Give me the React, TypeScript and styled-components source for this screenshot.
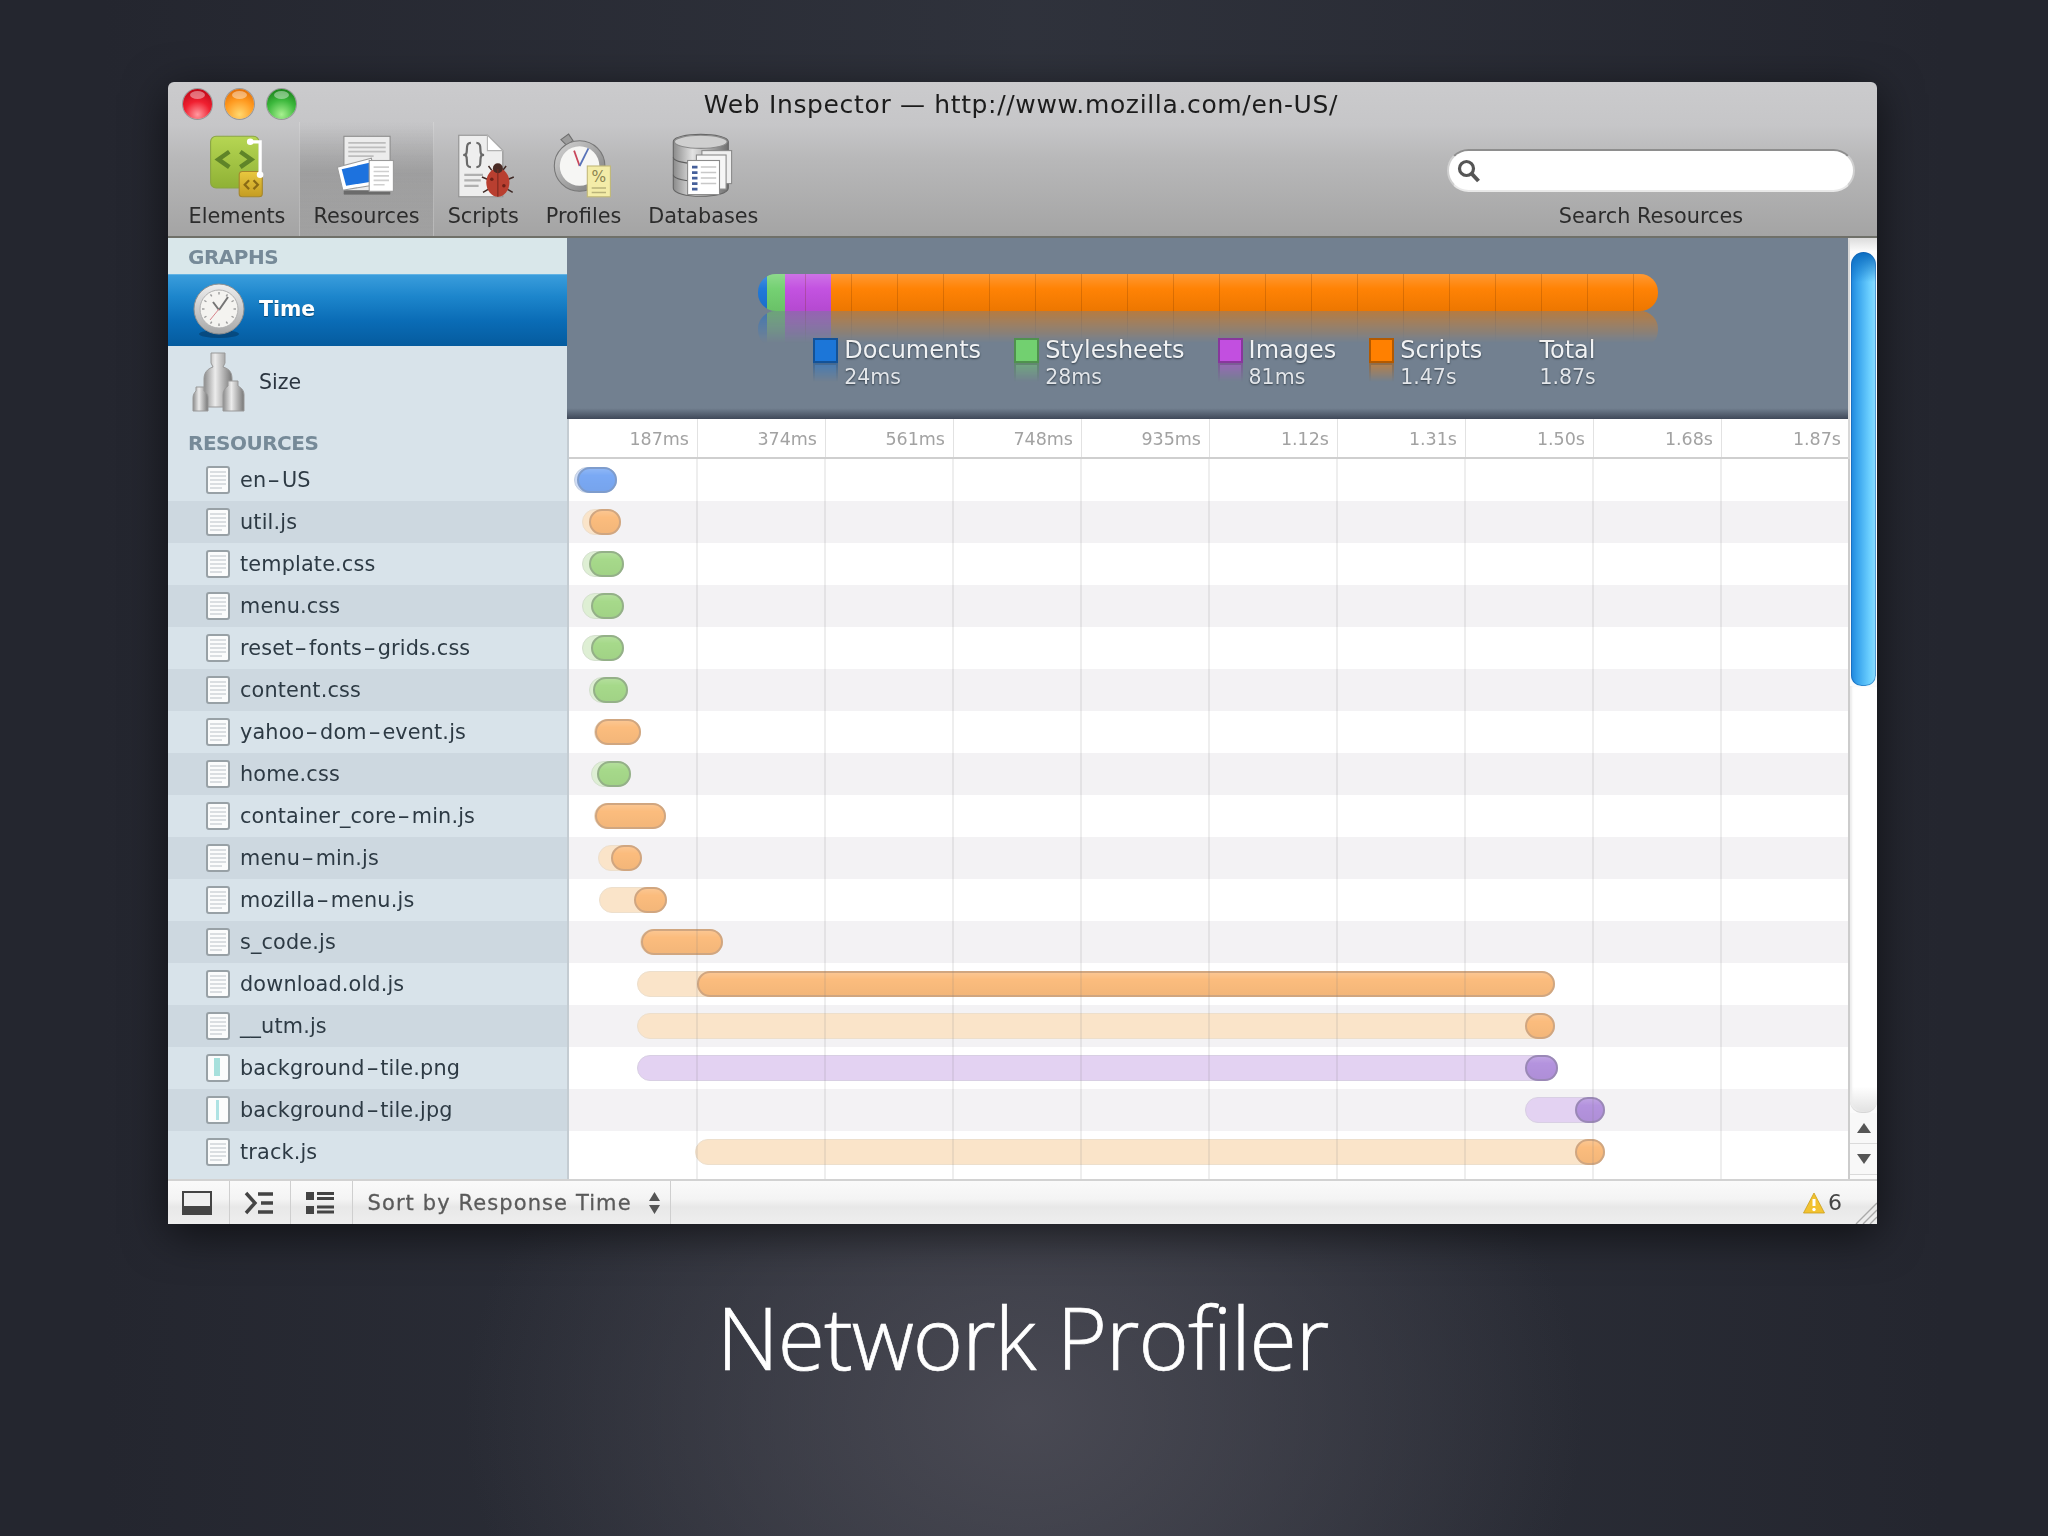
import React from "react"
import styled, { createGlobalStyle } from "styled-components"

type Kind = "blue" | "orange" | "green" | "purple"

interface Resource {
    name: string
    kind: Kind
    start: number
    solid: number
    end: number
    thumb?: "text" | "wide" | "thin"
}

const resources: Resource[] = [
    { name: "en-US", kind: "blue", start: 5, solid: 8, end: 48 },
    { name: "util.js", kind: "orange", start: 13, solid: 20, end: 52 },
    { name: "template.css", kind: "green", start: 13, solid: 20, end: 55 },
    { name: "menu.css", kind: "green", start: 13, solid: 22, end: 55 },
    { name: "reset-fonts-grids.css", kind: "green", start: 13, solid: 22, end: 55 },
    { name: "content.css", kind: "green", start: 20, solid: 24, end: 59 },
    { name: "yahoo-dom-event.js", kind: "orange", start: 25, solid: 26, end: 72 },
    { name: "home.css", kind: "green", start: 22, solid: 28, end: 62 },
    { name: "container_core-min.js", kind: "orange", start: 25, solid: 26, end: 97 },
    { name: "menu-min.js", kind: "orange", start: 29, solid: 42, end: 73 },
    { name: "mozilla-menu.js", kind: "orange", start: 30, solid: 65, end: 98 },
    { name: "s_code.js", kind: "orange", start: 71, solid: 72, end: 154 },
    { name: "download.old.js", kind: "orange", start: 68, solid: 128, end: 986 },
    { name: "__utm.js", kind: "orange", start: 68, solid: 956, end: 986 },
    { name: "background-tile.png", kind: "purple", start: 68, solid: 956, end: 989, thumb: "wide" },
    { name: "background-tile.jpg", kind: "purple", start: 956, solid: 1006, end: 1036, thumb: "thin" },
    { name: "track.js", kind: "orange", start: 126, solid: 1006, end: 1036 },
]

const ticks = ["187ms", "374ms", "561ms", "748ms", "935ms", "1.12s", "1.31s", "1.50s", "1.68s", "1.87s"]

const legend = [
    { label: "Documents", value: "24ms", color: "#1c76d8" },
    { label: "Stylesheets", value: "28ms", color: "#72d070" },
    { label: "Images", value: "81ms", color: "#c24fe0" },
    { label: "Scripts", value: "1.47s", color: "#ff8000" },
]

const tools = [
    { label: "Elements", icon: <ElementsIcon /> },
    { label: "Resources", icon: <ResourcesIcon />, active: true },
    { label: "Scripts", icon: <ScriptsIcon /> },
    { label: "Profiles", icon: <ProfilesIcon /> },
    { label: "Databases", icon: <DatabasesIcon /> },
]

function ElementsIcon() {
    return (
        <svg width="66" height="66" viewBox="0 0 60 60">
            <defs>
                <linearGradient id="elGreen" x1="0" y1="0" x2="0" y2="1">
                    <stop offset="0" stopColor="#b6d653" />
                    <stop offset="1" stopColor="#8fb135" />
                </linearGradient>
                <linearGradient id="elYellow" x1="0" y1="0" x2="0" y2="1">
                    <stop offset="0" stopColor="#e9c83f" />
                    <stop offset="1" stopColor="#c49c22" />
                </linearGradient>
            </defs>
            <rect x="6" y="3" width="44" height="47" rx="5" fill="url(#elGreen)" stroke="#8aa544" />
            <path d="M23 17 L13 24 L23 31 M33 17 L43 24 L33 31" fill="none" stroke="#5f8428" strokeWidth="4" />
            <rect x="32" y="35" width="21" height="23" rx="3" fill="url(#elYellow)" stroke="#a5862c" />
            <path d="M41 43 L37 47 L41 51 M45 43 L49 47 L45 51" fill="none" stroke="#8a6a15" strokeWidth="2" />
            <path d="M42 8 H51 V38" fill="none" stroke="#fff" strokeWidth="3" />
            <circle cx="42" cy="8" r="3" fill="#fff" />
            <circle cx="51" cy="38" r="3" fill="#fff" />
        </svg>
    )
}

function ResourcesIcon() {
    return (
        <svg width="66" height="66" viewBox="0 0 60 60">
            <rect x="9" y="3" width="42" height="52" fill="#ececec" stroke="#8d8d8d" />
            <rect x="9" y="52" width="42" height="4" fill="#6b6b6b" />
            <path d="M13 9 H47 M13 13 H47 M13 17 H47 M13 21 H36" stroke="#bdbdbd" strokeWidth="1.6" />
            <path d="M3 31 L34 23 L38 47 L8 52 Z" fill="#fff" stroke="#9b9b9b" />
            <path d="M7 33 L32 27 L35 44 L11 48 Z" fill="#1d72de" />
            <rect x="32" y="25" width="22" height="28" fill="#fff" stroke="#9a9a9a" />
            <path d="M36 31 H50 M36 35 H50 M36 39 H50 M36 43 H50 M36 47 H46" stroke="#cfcfcf" strokeWidth="1.5" />
        </svg>
    )
}

function ScriptsIcon() {
    return (
        <svg width="66" height="66" viewBox="0 0 60 60">
            <path d="M8 2 H34 L48 16 V58 H8 Z" fill="#eeeeee" stroke="#8f8f8f" />
            <path d="M34 2 V16 H48 Z" fill="#fff" stroke="#b3b3b3" />
            <path
                d="M19 9 C14 9 16 15 15 18 C15 20 12 20 12 20 C12 20 15 20 15 22 C16 26 14 31 19 31 M24 9 C29 9 27 15 28 18 C28 20 31 20 31 20 C31 20 28 20 28 22 C27 26 29 31 24 31"
                fill="none"
                stroke="#6a6a6a"
                strokeWidth="2"
            />
            <path d="M13 38 H30 M13 43 H28 M13 48 H26" stroke="#b0b0b0" strokeWidth="2" />
            <path d="M38 34 L35 30 M48 34 L51 30 M34 42 L29 40 M53 42 L58 40 M35 51 L30 54 M52 51 L57 54" stroke="#3f2a26" strokeWidth="1.4" />
            <ellipse cx="43.5" cy="45" rx="10.5" ry="13" fill="#b93f30" />
            <circle cx="43.5" cy="32" r="4.5" fill="#4a2b25" />
            <path d="M43.5 33 V58" stroke="#7b2a20" strokeWidth="1" />
            <circle cx="38" cy="42" r="1.6" fill="#6e2118" />
            <circle cx="49" cy="48" r="1.6" fill="#6e2118" />
        </svg>
    )
}

function ProfilesIcon() {
    return (
        <svg width="66" height="66" viewBox="0 0 60 60">
            <defs>
                <linearGradient id="watchRing" x1="0" y1="0" x2="1" y2="1">
                    <stop offset="0" stopColor="#d6d6d6" />
                    <stop offset="1" stopColor="#777" />
                </linearGradient>
            </defs>
            <path d="M9 6 L16 1 L20 7 L14 11 Z" fill="#9c9c9c" stroke="#6f6f6f" />
            <circle cx="26" cy="30" r="23" fill="url(#watchRing)" stroke="#777" />
            <circle cx="26" cy="30" r="18" fill="#f6f6f4" />
            <path d="M26 30 L21 16" stroke="#c8465a" strokeWidth="1.6" />
            <path d="M26 30 L34 14" stroke="#5872b8" strokeWidth="1.6" />
            <rect x="33" y="30" width="21" height="28" fill="#f3eca8" stroke="#c2b978" />
            <text x="43.5" y="45" fontSize="14" fill="#8a8450" textAnchor="middle" fontFamily="'DejaVu Sans', sans-serif">%</text>
            <path d="M37 50 H50 M37 54 H50" stroke="#b9b27a" strokeWidth="1.4" />
        </svg>
    )
}

function DatabasesIcon() {
    return (
        <svg width="66" height="66" viewBox="0 0 60 60">
            <defs>
                <linearGradient id="dbMetal" x1="0" y1="0" x2="1" y2="0">
                    <stop offset="0" stopColor="#8b8b8b" />
                    <stop offset="0.35" stopColor="#e2e2e2" />
                    <stop offset="1" stopColor="#6e6e6e" />
                </linearGradient>
            </defs>
            <path d="M3 8 C3 -1 53 -1 53 8 V50 C53 60 3 60 3 50 Z" fill="url(#dbMetal)" stroke="#666" />
            <ellipse cx="28" cy="8" rx="24" ry="6" fill="#cfcfcf" stroke="#8a8a8a" />
            <path d="M3 22 C3 30 53 30 53 22 M3 38 C3 46 53 46 53 38" fill="none" stroke="#5e5e5e" />
            <rect x="29" y="16" width="27" height="30" fill="#efefef" stroke="#8a8a8a" />
            <rect x="24" y="20" width="27" height="31" fill="#f6f6f6" stroke="#8a8a8a" />
            <rect x="16" y="25" width="29" height="31" fill="#fff" stroke="#8a8a8a" />
            <path d="M20 31 H25 M20 36 H25 M20 41 H25 M20 46 H25 M20 51 H25" stroke="#46609b" strokeWidth="2.4" />
            <path d="M28 31 H42 M28 36 H42 M28 41 H42 M28 46 H42" stroke="#c8c8c8" strokeWidth="1.4" />
        </svg>
    )
}

function ClockIcon() {
    const marks = [0, 30, 60, 90, 120, 150, 180, 210, 240, 270, 300, 330]
    return (
        <svg width="54" height="58" viewBox="0 0 54 58">
            <defs>
                <linearGradient id="clockRing" x1="0" y1="0" x2="0" y2="1">
                    <stop offset="0" stopColor="#eeeeee" />
                    <stop offset="1" stopColor="#a8a8a8" />
                </linearGradient>
            </defs>
            <ellipse cx="27" cy="52" rx="20" ry="4" fill="#06365e" opacity="0.55" />
            <circle cx="27" cy="27" r="25" fill="url(#clockRing)" stroke="#8f8f8f" />
            <circle cx="27" cy="27" r="19" fill="#f4f3f0" stroke="#b2b2b2" />
            {marks.map((m) => (
                <path key={m} d="M27 10 V12.5" stroke="#9a9a9a" strokeWidth="1.4" transform={`rotate(${m} 27 27)`} />
            ))}
            <path d="M27 28 L21 20 M27 28 L36 15" stroke="#757575" strokeWidth="2" />
            <path d="M27 27 L18 38" stroke="#d8848c" strokeWidth="1" />
        </svg>
    )
}

function WeightsIcon() {
    return (
        <svg width="54" height="62" viewBox="0 0 54 62">
            <defs>
                <linearGradient id="weightMetal" x1="0" y1="0" x2="1" y2="0">
                    <stop offset="0" stopColor="#8c8c8c" />
                    <stop offset="0.4" stopColor="#ececec" />
                    <stop offset="1" stopColor="#777" />
                </linearGradient>
            </defs>
            <path d="M19 2 H33 V12 L31 16 C38 18 40 22 40 28 V56 H12 V28 C12 22 15 18 21 16 L19 12 Z" fill="url(#weightMetal)" stroke="#999" />
            <path d="M4 36 H12 V40 C15 42 16 44 16 47 V60 H1 V47 C1 44 2 42 4 40 Z" fill="url(#weightMetal)" stroke="#999" />
            <path d="M36 30 H46 V35 C50 37 52 40 52 44 V60 H31 V44 C31 40 33 37 36 35 Z" fill="url(#weightMetal)" stroke="#999" />
        </svg>
    )
}

function FileIcon({ thumb = "text" }: { thumb?: "text" | "wide" | "thin" }) {
    return (
        <svg width="24" height="28" viewBox="0 0 24 28">
            <rect x="1" y="1" width="22" height="26" rx="2" fill="#fbfcfc" stroke="#98a1a6" strokeWidth="2" />
            {thumb === "text" && (
                <path d="M4 6 H20 M4 10 H20 M4 14 H20 M4 18 H20 M4 22 H16" stroke="#dadee1" strokeWidth="1.8" />
            )}
            {thumb === "wide" && <rect x="8" y="4" width="6" height="18" fill="#a6e0dc" />}
            {thumb === "thin" && <rect x="10" y="4" width="3" height="20" fill="#aee2e3" />}
        </svg>
    )
}

function SearchIcon() {
    return (
        <svg width="26" height="26" viewBox="0 0 26 26">
            <circle cx="10.5" cy="10.5" r="7" fill="none" stroke="#555" strokeWidth="3.2" />
            <path d="M15.5 15.5 L22.5 23" stroke="#555" strokeWidth="4" />
        </svg>
    )
}

function DockIcon() {
    return (
        <svg width="30" height="26" viewBox="0 0 30 26">
            <rect x="0" y="1" width="30" height="24" fill="#444" />
            <rect x="2" y="3" width="26" height="13" fill="#efefef" />
        </svg>
    )
}

function ConsoleIcon() {
    return (
        <svg width="30" height="26" viewBox="0 0 30 26">
            <path d="M2 3 L11 13 L2 23" fill="none" stroke="#444" strokeWidth="3.4" />
            <path d="M14 4 H29 M17 13 H29 M14 22 H29" stroke="#444" strokeWidth="3.6" />
        </svg>
    )
}

function ListIcon() {
    return (
        <svg width="30" height="26" viewBox="0 0 30 26">
            <path d="M1 2 H9 V10 H1 Z M1 16 H9 V24 H1 Z" fill="#444" />
            <path d="M12 3.5 H29 M12 8.5 H29 M12 17 H29 M12 22 H29" stroke="#444" strokeWidth="2.8" />
        </svg>
    )
}

function UpDownIcon() {
    return (
        <svg width="13" height="24" viewBox="0 0 13 24">
            <path d="M6.5 1 L12 10 H1 Z M6.5 23 L1 14 H12 Z" fill="#555" />
        </svg>
    )
}

function WarningIcon() {
    return (
        <svg width="22" height="22" viewBox="0 0 22 22">
            <path d="M11 1 L21.5 21 H0.5 Z" fill="#f2c230" stroke="#c99e1d" strokeWidth="0.8" />
            <path d="M11 7 V14" stroke="#fff" strokeWidth="3" />
            <circle cx="11" cy="17.5" r="1.7" fill="#fff" />
        </svg>
    )
}

function ArrowIcon({ down = false }: { down?: boolean }) {
    return (
        <svg width="14" height="12" viewBox="0 0 14 12">
            <path d={down ? "M0 1 H14 L7 11 Z" : "M7 1 L14 11 H0 Z"} fill="#555" />
        </svg>
    )
}

function GripIcon() {
    return (
        <svg width="22" height="22" viewBox="0 0 22 22">
            <path d="M1 22 L22 1 M8 22 L22 8 M15 22 L22 15" stroke="#a9a9a9" strokeWidth="1.4" />
        </svg>
    )
}

// the hyphen in this font is much shorter than the one in the shot
function splitName(name: string) {
    return name.split("-").map((part, i) => (
        <React.Fragment key={i}>
            {i > 0 && <NameHyphen>-</NameHyphen>}
            {part}
        </React.Fragment>
    ))
}

export default function App() {
    return (
        <>
            <GlobalStyle />
            <Page>
                <Window>
                    <Chrome>
                        <TitleBar>
                            <Lights>
                                <Light $color="red" />
                                <Light $color="orange" />
                                <Light $color="green" />
                            </Lights>
                            <Title>Web Inspector — http://www.mozilla.com/en-US/</Title>
                        </TitleBar>
                        <Toolbar>
                            {tools.map((tool) => (
                                <Tool key={tool.label} $active={tool.active}>
                                    <ToolIcon>{tool.icon}</ToolIcon>
                                    <ToolLabel>{tool.label}</ToolLabel>
                                </Tool>
                            ))}
                            <SearchBlock>
                                <SearchField>
                                    <SearchIcon />
                                </SearchField>
                                <ToolLabel>Search Resources</ToolLabel>
                            </SearchBlock>
                        </Toolbar>
                    </Chrome>

                    <Body>
                        <Sidebar>
                            <SectionHeading>Graphs</SectionHeading>
                            <GraphRow $selected>
                                <GraphIcon><ClockIcon /></GraphIcon>
                                <GraphLabel $selected>Time</GraphLabel>
                            </GraphRow>
                            <GraphRow>
                                <GraphIcon><WeightsIcon /></GraphIcon>
                                <GraphLabel>Size</GraphLabel>
                            </GraphRow>
                            <SectionHeading $resources>Resources</SectionHeading>
                            {resources.map((res, i) => (
                                <FileRow key={res.name} $odd={i % 2 === 1}>
                                    <FileIcon thumb={res.thumb} />
                                    <FileName>{splitName(res.name)}</FileName>
                                </FileRow>
                            ))}
                        </Sidebar>

                        <Main>
                            <Summary>
                                <SummaryBar>
                                    <Segment $color="#1c76d8" $width={9} />
                                    <Segment $color="#72d070" $width={18} />
                                    <Segment $color="#c24fe0" $width={46} />
                                    <Segment $color="#ff8000" $width={827} />
                                </SummaryBar>
                                <Legend>
                                    {legend.map((item) => (
                                        <LegendItem key={item.label}>
                                            <Swatch $color={item.color} />
                                            <LegendText>
                                                <LegendLabel>{item.label}</LegendLabel>
                                                <LegendValue>{item.value}</LegendValue>
                                            </LegendText>
                                        </LegendItem>
                                    ))}
                                    <LegendTotal>
                                        <LegendLabel>Total</LegendLabel>
                                        <LegendValue>1.87s</LegendValue>
                                    </LegendTotal>
                                </Legend>
                            </Summary>

                            <Timeline>
                                <Ticks>
                                    {ticks.map((tick) => (
                                        <Tick key={tick}>{tick}</Tick>
                                    ))}
                                </Ticks>
                                <Rows>
                                    {resources.map((res, i) => (
                                        <Row key={res.name} $odd={i % 2 === 1}>
                                            <Bar
                                                $kind={res.kind}
                                                style={{ marginLeft: res.start, width: res.end - res.start }}
                                            >
                                                <BarSolid $kind={res.kind} style={{ width: res.end - res.solid }} />
                                            </Bar>
                                        </Row>
                                    ))}
                                    <GridLines>
                                        {ticks.map((tick) => (
                                            <GridLine key={tick} />
                                        ))}
                                    </GridLines>
                                </Rows>
                            </Timeline>
                        </Main>

                        <Scrollbar>
                            <ScrollCap />
                            <ScrollThumb />
                            <ScrollTrack />
                            <ScrollButton><ArrowIcon /></ScrollButton>
                            <ScrollButton><ArrowIcon down /></ScrollButton>
                        </Scrollbar>
                    </Body>

                    <StatusBar>
                        <StatusButton><DockIcon /></StatusButton>
                        <StatusButton><ConsoleIcon /></StatusButton>
                        <StatusButton><ListIcon /></StatusButton>
                        <SortButton>
                            Sort by Response Time
                            <UpDownIcon />
                        </SortButton>
                        <Warnings>
                            <WarningIcon />
                            <WarningCount>6</WarningCount>
                        </Warnings>
                        <Grip><GripIcon /></Grip>
                    </StatusBar>
                </Window>
                <Caption>Network Profiler</Caption>
            </Page>
        </>
    )
}

// page

const GlobalStyle = createGlobalStyle`
    html, body {
        margin: 0;
        padding: 0;
        background: #24262f;
    }
`

const Page = styled.div`
    width: 2048px;
    height: 1536px;
    overflow: hidden;
    box-sizing: border-box;
    padding: 82px 171px 0 168px;
    font-family: "DejaVu Sans", sans-serif;
    background:
        radial-gradient(ellipse 560px 430px at 50% 92%, rgba(76, 76, 86, 0.9), rgba(76, 76, 86, 0) 100%),
        linear-gradient(90deg, rgba(36, 38, 47, 0) 5%, rgba(56, 60, 70, 0.55) 50%, rgba(36, 38, 47, 0) 95%),
        #24262f;
`

const Window = styled.div`
    display: flex;
    flex-direction: column;
    width: 1709px;
    height: 1142px;
    border-radius: 6px 6px 0 0;
    overflow: hidden;
    box-shadow: 0 10px 44px rgba(0, 0, 0, 0.6);
    filter: blur(0.5px);
`

const Caption = styled.div`
    margin-top: 58px;
    text-align: center;
    font-family: "Open Sans", sans-serif;
    font-weight: 300;
    font-size: 86px;
    line-height: 110px;
    letter-spacing: -1px;
    color: #fff;
    -webkit-text-stroke: 0.7px #fff;
`

// title bar + toolbar

const Chrome = styled.div`
    flex: none;
    height: 156px;
    box-sizing: border-box;
    display: flex;
    flex-direction: column;
    border-bottom: 2px solid #6f7069;
    background: linear-gradient(#cbcbcd 0%, #c6c6c8 28%, #b8b8b9 50%, #a4a4a4 100%);
`

const TitleBar = styled.div`
    position: relative;
    flex: none;
    height: 44px;
    display: flex;
    align-items: center;
    justify-content: center;
`

const Lights = styled.div`
    position: absolute;
    left: 15px;
    top: 7px;
    display: flex;
    gap: 13px;
`

const lightColors = {
    red: "radial-gradient(circle at 50% 85%, #ff9aa0 0%, #f02030 45%, #b00010 100%)",
    orange: "radial-gradient(circle at 50% 85%, #ffd870 0%, #ff9a20 50%, #d86000 100%)",
    green: "radial-gradient(circle at 50% 85%, #a8f090 0%, #3cb83c 50%, #107010 100%)",
}

const Light = styled.span<{ $color: keyof typeof lightColors }>`
    position: relative;
    width: 29px;
    height: 30px;
    border-radius: 50%;
    background: ${(p) => lightColors[p.$color]};
    box-shadow: 0 0 0 1px rgba(80, 80, 80, 0.4);
    &::after {
        content: "";
        position: absolute;
        left: 7px;
        right: 7px;
        top: 2px;
        height: 8px;
        border-radius: 50%;
        background: rgba(255, 255, 255, 0.4);
    }
`

const Title = styled.div`
    font-size: 25px;
    letter-spacing: 0.65px;
    color: #1c1c1c;
    margin-left: -3px;
`

const Toolbar = styled.div`
    flex: 1;
    display: flex;
    padding-left: 7px;
`

const Tool = styled.div<{ $active?: boolean }>`
    display: flex;
    flex-direction: column;
    align-items: center;
    padding: 7px 13.5px 0;
    ${(p) =>
        p.$active &&
        `
        margin-top: -4px;
        padding-top: 11px;
        border-left: 1px solid rgba(230, 230, 230, 0.35);
        border-right: 1px solid rgba(230, 230, 230, 0.35);
        background: linear-gradient(rgba(90, 90, 90, 0), rgba(80, 80, 80, 0.22) 45%, rgba(100, 100, 100, 0.06) 100%);
    `}
`

const ToolIcon = styled.div`
    height: 66px;
    display: flex;
    align-items: center;
`

const ToolLabel = styled.div`
    font-size: 20.8px;
    line-height: 26px;
    margin-top: 4px;
    color: #2c2c2c;
    white-space: nowrap;
`

const SearchBlock = styled.div`
    margin-left: auto;
    width: 408px;
    margin-right: 22px;
    display: flex;
    flex-direction: column;
    align-items: center;
    padding-top: 23px;
`

const SearchField = styled.div`
    width: 100%;
    height: 43px;
    box-sizing: border-box;
    display: flex;
    align-items: center;
    padding-left: 7px;
    border-radius: 22px;
    background: #fff;
    border: 2px solid #8e8e8e;
    border-bottom-color: #e8e8e8;
    border-left-color: #d0d0d0;
    border-right-color: #d0d0d0;
    margin-bottom: 7px;
`

// body

const Body = styled.div`
    flex: 1;
    min-height: 0;
    display: flex;
`

const Sidebar = styled.div`
    flex: none;
    width: 399px;
    background: #d8e3ea;
`

const SectionHeading = styled.div<{ $resources?: boolean }>`
    display: flex;
    align-items: center;
    padding-left: 20px;
    font-size: 20px;
    font-weight: bold;
    letter-spacing: -0.5px;
    text-transform: uppercase;
    color: #768a98;
    ${(p) =>
        p.$resources
            ? "height: 22px; padding-top: 14px; padding-bottom: 2px; margin-bottom: 3px;"
            : "height: 36px; padding-top: 1px; box-sizing: border-box; background: #d9e7ea;"}
`

const GraphRow = styled.div<{ $selected?: boolean }>`
    height: 72px;
    display: flex;
    align-items: center;
    padding-left: 24px;
    gap: 13px;
    ${(p) =>
        p.$selected &&
        `
        background: linear-gradient(#3a9ddc 0%, #1d86cc 30%, #0a6cb6 65%, #055b9e 100%);
        border-top: 1px solid #62b3e4;
        box-sizing: border-box;
    `}
`

const GraphIcon = styled.div`
    width: 54px;
    display: flex;
    justify-content: center;
`

const GraphLabel = styled.div<{ $selected?: boolean }>`
    font-size: 20.5px;
    font-weight: ${(p) => (p.$selected ? "bold" : "normal")};
    color: ${(p) => (p.$selected ? "#fff" : "#2b3540")};
    text-shadow: ${(p) => (p.$selected ? "0 1px 1px rgba(0, 0, 0, 0.4)" : "none")};
    margin-bottom: ${(p) => (p.$selected ? "4px" : "0")};
`

const FileRow = styled.div<{ $odd: boolean }>`
    height: 42px;
    display: flex;
    align-items: center;
    padding-left: 38px;
    gap: 10px;
    background: ${(p) => (p.$odd ? "#cdd8e0" : "transparent")};
`

const FileName = styled.div`
    font-size: 20.8px;
    letter-spacing: 0.15px;
    color: #2d3a44;
`

const NameHyphen = styled.span`
    display: inline-block;
    margin: 0 4px;
    transform: scaleX(1.7);
`

const Main = styled.div`
    flex: 1;
    min-width: 0;
    display: flex;
    flex-direction: column;
`

const Summary = styled.div`
    flex: none;
    height: 181px;
    box-sizing: border-box;
    padding-top: 36px;
    background: linear-gradient(#728090 0%, #728090 94%, #3f4858 100%);
`

const SummaryBar = styled.div`
    position: relative;
    display: flex;
    width: 900px;
    height: 37px;
    margin: 0 auto;
    border-radius: 18px;
    overflow: hidden;
    -webkit-box-reflect: below 0px linear-gradient(transparent 14%, rgba(255, 255, 255, 0.55));
    &::after {
        content: "";
        position: absolute;
        inset: 0;
        background: repeating-linear-gradient(90deg, transparent 0, transparent 45px, rgba(110, 50, 0, 0.24) 45px, rgba(110, 50, 0, 0.24) 46px);
        background-position: 2px 0;
    }
`

const Segment = styled.div<{ $color: string; $width: number }>`
    flex: none;
    width: ${(p) => p.$width}px;
    background:
        linear-gradient(rgba(255, 255, 255, 0.2), rgba(255, 255, 255, 0.02) 40%, rgba(0, 0, 0, 0.07)),
        ${(p) => p.$color};
`

const Legend = styled.div`
    display: flex;
    justify-content: center;
    margin-top: 25px;
    padding-right: 6px;
    gap: 33px;
`

const LegendItem = styled.div`
    display: flex;
    gap: 6px;
`

const Swatch = styled.div<{ $color: string }>`
    flex: none;
    width: 25px;
    height: 25px;
    box-sizing: border-box;
    margin-top: 2px;
    border: 2px solid rgba(0, 0, 0, 0.3);
    background: ${(p) => p.$color};
    -webkit-box-reflect: below 0px linear-gradient(transparent 25%, rgba(255, 255, 255, 0.5));
`

const LegendText = styled.div`
    display: flex;
    flex-direction: column;
`

const LegendTotal = styled(LegendText)`
    padding-left: 24px;
`

const LegendLabel = styled.div`
    font-size: 24px;
    line-height: 28px;
    color: #f0f2f4;
    text-shadow: 0 1px 2px rgba(30, 40, 50, 0.8);
`

const LegendValue = styled.div`
    font-size: 20.5px;
    line-height: 26px;
    color: #e3e6ea;
    text-shadow: 0 1px 2px rgba(30, 40, 50, 0.8);
`

const Timeline = styled.div`
    flex: 1;
    min-height: 0;
    display: flex;
    flex-direction: column;
    background: #fff;
    border-left: 2px solid #c4ccd2;
`

const Ticks = styled.div`
    flex: none;
    height: 40px;
    box-sizing: border-box;
    display: flex;
    padding-left: 1px;
    border-bottom: 2px solid #cfcfcf;
`

const Tick = styled.div`
    flex: none;
    width: 128px;
    box-sizing: border-box;
    padding-right: 8px;
    text-align: right;
    font-size: 17.5px;
    line-height: 40px;
    color: #a2a2a2;
    border-right: 1px solid #e2e2e2;
`

const Rows = styled.div`
    position: relative;
    flex: 1;
    min-height: 0;
`

const Row = styled.div<{ $odd: boolean }>`
    height: 42px;
    display: flex;
    align-items: center;
    background: ${(p) => (p.$odd ? "#f3f2f4" : "#fff")};
`

const GridLines = styled.div`
    position: absolute;
    inset: 0 0 0 1px;
    display: flex;
    pointer-events: none;
`

const GridLine = styled.div`
    flex: none;
    width: 128px;
    box-sizing: border-box;
    border-right: 2px solid rgba(120, 120, 120, 0.13);
`

const barColors = {
    blue: { light: "#cfdcf5", lightBorder: "#c4cfe0", solid: "#7aa9f4", solidBorder: "#7e9ccc" },
    orange: { light: "#fae4c9", lightBorder: "#eddfcc", solid: "#fbbc7d", solidBorder: "#d0a680" },
    green: { light: "#deefd4", lightBorder: "#d4e0ce", solid: "#a6d98a", solidBorder: "#94b088" },
    purple: { light: "#e3d2f2", lightBorder: "#d8cfe3", solid: "#b493de", solidBorder: "#9a88b6" },
}

const Bar = styled.div<{ $kind: Kind }>`
    flex: none;
    height: 26px;
    box-sizing: border-box;
    display: flex;
    justify-content: flex-end;
    border-radius: 13px;
    background: ${(p) => barColors[p.$kind].light};
    border: 1px solid ${(p) => barColors[p.$kind].lightBorder};
`

const BarSolid = styled.div<{ $kind: Kind }>`
    flex: none;
    height: 26px;
    margin: -1px -1px 0 0;
    box-sizing: border-box;
    border-radius: 13px;
    background: linear-gradient(rgba(255, 255, 255, 0.15), rgba(255, 255, 255, 0) 30%, rgba(0, 0, 0, 0.03)), ${(p) => barColors[p.$kind].solid};
    border: 2px solid ${(p) => barColors[p.$kind].solidBorder};
`

const Scrollbar = styled.div`
    flex: none;
    width: 29px;
    display: flex;
    flex-direction: column;
    padding-bottom: 4px;
    background: #fbfbfb;
    border-left: 2px solid #d8d8d8;
    box-sizing: border-box;
`

const ScrollCap = styled.div`
    flex: none;
    height: 14px;
    background: linear-gradient(#dcdcdc, #fdfdfd);
`

const ScrollThumb = styled.div`
    flex: none;
    height: 434px;
    margin: 0 1px 0 1px;
    border-radius: 13px 13px 11px 11px;
    background:
        linear-gradient(#0a6cc0 0, rgba(10, 108, 192, 0) 30px),
        linear-gradient(90deg, #1f86dc 0%, #36a2ec 25%, #6cd0ff 75%, #8adcff 100%);
    box-shadow: inset 0 0 0 1px rgba(20, 90, 170, 0.5);
`

const ScrollTrack = styled.div`
    flex: 1;
    border-radius: 0 0 12px 12px;
    background: linear-gradient(#fff 0, #fff 94%, #e2e2e2 100%);
    border-bottom: 1px solid #d6d6d6;
    box-shadow: inset 2px 0 2px #ececec;
`

const ScrollButton = styled.div`
    flex: none;
    height: 30px;
    display: flex;
    align-items: center;
    justify-content: center;
    background: #f8f8f8;
    border-bottom: 1px solid #dadada;
`

// status bar

const StatusBar = styled.div`
    flex: none;
    height: 45px;
    box-sizing: border-box;
    display: flex;
    position: relative;
    border-top: 2px solid #d2d2d2;
    background: linear-gradient(#fafafa 0%, #f4f4f4 42%, #e8e8e8 60%, #eeeeee 100%);
`

const StatusButton = styled.div`
    flex: none;
    width: 61.5px;
    box-sizing: border-box;
    display: flex;
    align-items: center;
    justify-content: center;
    border-right: 1px solid #cfcfcf;
    padding-right: 2px;
`

const SortButton = styled.div`
    flex: none;
    width: 318px;
    box-sizing: border-box;
    display: flex;
    align-items: center;
    justify-content: space-between;
    padding: 0 9px 0 15px;
    font-size: 21px;
    letter-spacing: 1.1px;
    color: #5a5a5a;
    -webkit-text-stroke: 0.3px #5a5a5a;
    border-right: 1px solid #cfcfcf;
    white-space: nowrap;
`

const Warnings = styled.div`
    margin-left: auto;
    display: flex;
    align-items: center;
    gap: 3px;
    padding-right: 35px;
`

const WarningCount = styled.div`
    font-size: 22px;
    color: #444;
`

const Grip = styled.div`
    position: absolute;
    right: 0;
    bottom: 0;
    width: 22px;
    height: 22px;
`
